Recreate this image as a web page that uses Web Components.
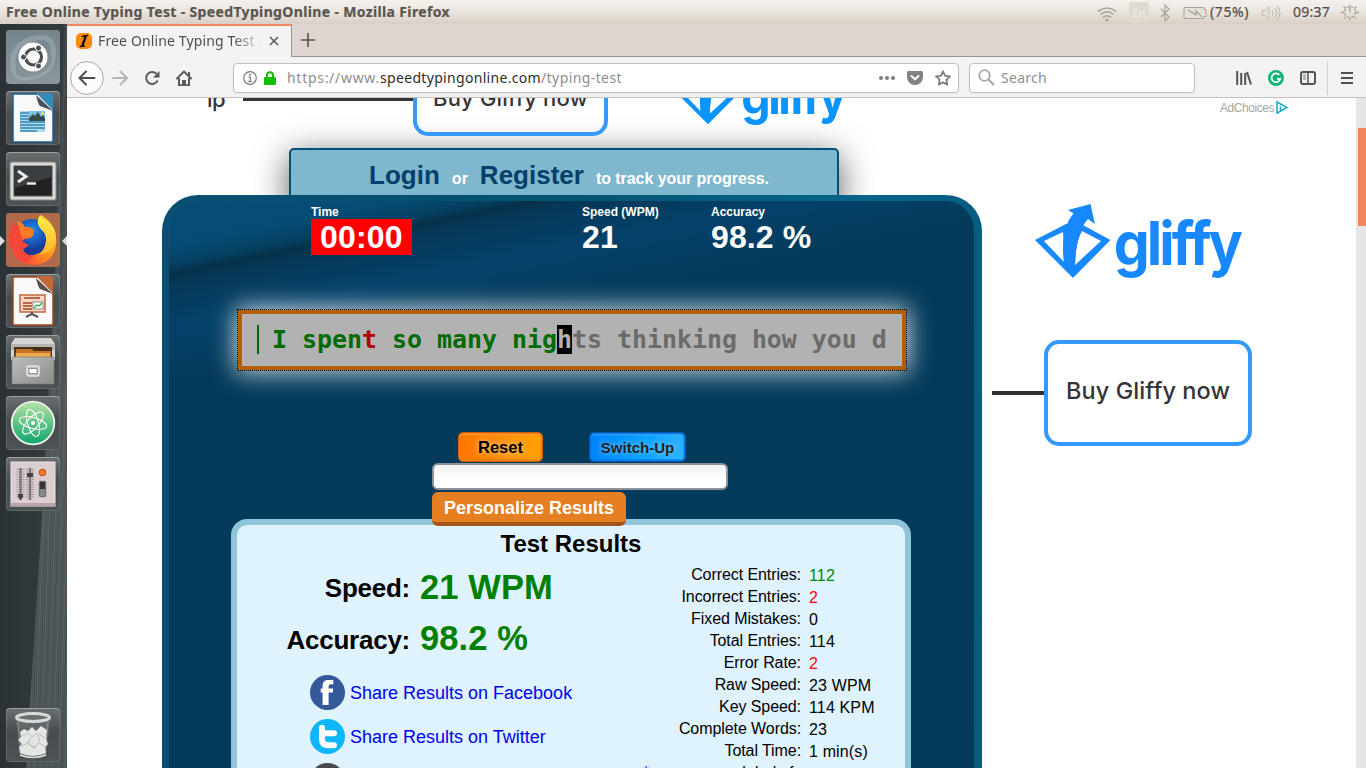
<!DOCTYPE html>
<html lang="en">
<head>
<meta charset="utf-8">
<title>Free Online Typing Test - SpeedTypingOnline</title>
<style>
html,body{margin:0;width:1366px;height:768px;overflow:hidden;background:#fff}
</style>
</head>
<body>
<desktop-screen></desktop-screen>
<script>
const define=(name,html,init)=>{
  const t=document.createElement('template');t.innerHTML=html;
  customElements.define(name,class extends HTMLElement{
    connectedCallback(){
      if(this.shadowRoot)return;
      this.attachShadow({mode:'open'}).appendChild(t.content.cloneNode(true));
      if(init)init.call(this,this.shadowRoot);
    }
  });
};

/* Inline text whose tracking is adjusted to span the width given in "w". */
define('fit-text','<style>:host{display:inline-block;white-space:pre;flex:none}</style><slot></slot>',function(){
  const fit=()=>{
    const w=+this.getAttribute('w');if(!w)return;
    this.style.letterSpacing='0px';
    const now=this.getBoundingClientRect().width;
    if(now)this.style.letterSpacing=((w-now)/this.textContent.length).toFixed(3)+'px';
  };
  fit();requestAnimationFrame(fit);
});

const ICONS={
wifi:[20,18,'<g fill="none" stroke="#a8a29b" stroke-width="1.6"><path d="M1 6.500Q10-.5 19 6.500"/><path d="M3.500 9.500Q10 4 16.500 9.500"/><path d="M6 12.500Q10 9 14 12.500"/></g><circle cx="10" cy="15" r="1.500" fill="#a8a29b"/>'],
bluetooth:[12,18,'<path d="M2 5l8 8-4 4V1l4 4-8 8" fill="none" stroke="#aaa49d" stroke-width="1.200"/>'],
battery:[24,14,'<path d="M1 1.500h20v2h2v7h-2v2H1z" fill="#e6e0da" stroke="#aaa49d"/><path d="M5 4l8 5v-4l6 6" fill="none" stroke="#aaa49d" stroke-width="1.300"/>'],
sound:[20,18,'<path d="M1 6.500h3l4-4v13l-4-4H1z" fill="#e6e0da" stroke="#c4bdb5"/><path d="M11 6q2.500 3 0 6M13.500 4q4.500 5 0 10M16 2q6 7 0 14" fill="none" stroke="#bab3ab"/>'],
gear:[18,18,'<circle cx="9" cy="9" r="5.500" fill="none" stroke="#aaa49d" stroke-width="1.200" stroke-dasharray="3 1.300"/><path d="M9 2v7M2.500 3.500l2 2M15.500 3.500l-2 2M0 9.500h3M15 9.500h3M3 15.500l1.500-1.500M15 15.500L13.500 14M9 15v2" stroke="#aaa49d" stroke-width="1.400"/>'],
favicon:[16,16,'<rect width="16" height="16" rx="5" fill="#ff8a0c"/><path d="M9.800 3L6.300 13" stroke="#111" stroke-width="2.400"/><path d="M5.800 3.600q2.500-.2 6.400-1.300M3.800 13.600q3-.8 5.200-.3" stroke="#111" stroke-width="1.500" fill="none"/>'],
close:[10,10,'<path d="M1 1l8 8M9 1l-8 8" stroke="#5a5a59" stroke-width="1.600"/>'],
plus:[14,14,'<path d="M7 0v14M0 7h14" stroke="#5a5653" stroke-width="1.700"/>'],
back:[34,34,'<circle cx="17" cy="17" r="16.400" fill="#fcfcfc" stroke="#a9a8a6"/><path d="M24.500 17H10M16 10.500L9.500 17l6.500 6.500" fill="none" stroke="#4c4c4c" stroke-width="2" stroke-linecap="round" stroke-linejoin="round"/>'],
forward:[16,16,'<path d="M1 8h14M8.500 1.500L15 8l-6.500 6.500" fill="none" stroke="#b6b5b4" stroke-width="2" stroke-linecap="round" stroke-linejoin="round"/>'],
reload:[16,16,'<path d="M13.600 10.500A6 6 0 1 1 12.500 3.800" fill="none" stroke="#5c5c5b" stroke-width="2"/><path d="M15.500 1v6.500H9z" fill="#5c5c5b"/>'],
home:[16,16,'<path d="M1 8.500L8 1.500l7 7" fill="none" stroke="#5c5c5b" stroke-width="2" stroke-linecap="round" stroke-linejoin="round"/><path d="M3 8v7.200h10V8" fill="none" stroke="#5c5c5b" stroke-width="2"/><path d="M6 15v-5h4v5z" fill="#5c5c5b"/><path d="M12 2h2v4h-2z" fill="#5c5c5b"/>'],
info:[14,14,'<circle cx="7" cy="7" r="6.300" fill="none" stroke="#7b7b7b" stroke-width="1.200"/><path d="M5.500 6H7.300v4.500M5 10.500h4" stroke="#7b7b7b" stroke-width="1.200" fill="none"/><circle cx="7" cy="3.700" r="1" fill="#7b7b7b"/>'],
lock:[12,14,'<rect y="6" width="12" height="8" rx="1" fill="#12bc00"/><path d="M3 7V4.300a3 3 0 0 1 6 0V7" fill="none" stroke="#12bc00" stroke-width="2"/>'],
dots:[16,4,'<circle cx="2" cy="2" r="2" fill="#7c7c7c"/><circle cx="8" cy="2" r="2" fill="#7c7c7c"/><circle cx="14" cy="2" r="2" fill="#7c7c7c"/>'],
pocket:[16,14,'<path d="M1.500 0h13A1.500 1.500 0 0 1 16 1.500V6A8 8 0 0 1 0 6V1.500A1.500 1.500 0 0 1 1.500 0z" fill="#818180"/><path d="M4.500 5L8 8.300 11.500 5" stroke="#fff" stroke-width="2" fill="none" stroke-linecap="round" stroke-linejoin="round"/>'],
star:[16,16,'<path d="M8 1.300l2.100 4.500 4.900.6-3.600 3.300.9 4.900L8 12.200l-4.300 2.400.9-4.900L1 6.400l4.900-.6z" fill="none" stroke="#7c7c7c" stroke-width="1.800" stroke-linejoin="round"/>'],
search:[17,17,'<circle cx="6.500" cy="6.500" r="5.300" fill="none" stroke="#a5a5a4" stroke-width="1.700"/><path d="M10.500 10.500l5.500 5.500" stroke="#a5a5a4" stroke-width="2"/>'],
library:[16,14,'<path d="M1.200 0v14M5.200 2v12M9.200 2v12M11 1l4 12.500" stroke="#555" stroke-width="2"/>'],
grammarly:[16,16,'<circle cx="8" cy="8" r="8" fill="#11b676"/><path d="M11.300 4.900A4.400 4.400 0 1 0 12.300 8.800H9" fill="none" stroke="#fff" stroke-width="1.700"/>'],
sidebar:[16,14,'<rect x="1" y="1" width="14" height="12" rx="2" fill="none" stroke="#555" stroke-width="2"/><path d="M8 1v12" stroke="#555" stroke-width="1.500"/><path d="M3 4h3M3 6h3M3 8h3" stroke="#777"/>'],
menu:[12,12,'<path d="M0 1h12M0 6h12M0 11h12" stroke="#505050" stroke-width="2"/>'],
adchoices:[12,13,'<path d="M1 .8l10 5.700L1 12.200z" fill="none" stroke="#12aacc" stroke-width="1.500"/><path d="M4.500 5.500v4.500" stroke="#12aacc" stroke-width="1.500"/><circle cx="4.500" cy="3.700" r=".8" fill="#12aacc"/>'],
facebook:[36,36,'<circle cx="17.500" cy="17.500" r="17.500" fill="#34599b"/><path d="M23.300 9.300h-2.400q-2.300 0-2.300 2.300v2h4.400v3.800h-4.400V30h-6V17.400h-1.900v-3.800h1.900v-2.700q0-5.900 5.800-5.900h4.900z" fill="#fff"/>'],
twitter:[36,36,'<circle cx="17.500" cy="17.500" r="17.500" fill="#0cb6fb"/><path d="M12 8.800V20q0 6.300 6.300 6.300H24M12.500 14.300H24" fill="none" stroke="#fff" stroke-width="6" stroke-linecap="round"/>'],
mail:[36,36,'<circle cx="17.500" cy="17.500" r="17.500" fill="#4a4a4a"/>'],
ubuntu:[54,54,'<defs><linearGradient id="g" x2="0" y2="1"><stop stop-color="#74858c"/><stop offset="1" stop-color="#8a969b"/></linearGradient></defs><rect width="54" height="54" rx="4" fill="url(#g)"/><g fill="none" stroke="#c3cccf" opacity=".3"><path d="M8 42Q2 16 26 9t21 18" stroke-width="5"/><path d="M46 12q8 28-16 35T8 36" stroke-width="3"/></g><circle cx="27" cy="27" r="14.500" fill="#fff"/><circle cx="27.500" cy="27" r="8" fill="none" stroke="#4a4f52" stroke-width="3.200"/><g fill="#4a4f52" stroke="#fff"><circle cx="17.500" cy="27" r="3"/><circle cx="32.500" cy="18" r="3"/><circle cx="32.500" cy="36" r="3"/></g>'],
writer:[54,54,'<path d="M7 3h26l14 15v33H7z" fill="#fafafa" stroke="#155f92" stroke-width="1.500"/><path d="M30 2h17v17z" fill="#3a89bd"/><path d="M30 4q2 9 4 11l13 5" fill="#223" opacity=".8"/><path d="M14 20h25v21H14z" fill="#a9dcf0"/><path d="M14 22h9M14 25h9M14 28h9M14 31h25M14 34h25M14 37h25M14 40h17" stroke="#3282b4" stroke-width="1.400"/><path d="M23 20h16v10H23z" fill="#80c2ec"/><path d="M23 30v-3l4-4 2 2 3-4 3 5 2-2 2 3v3z" fill="#394b44"/><circle cx="36.500" cy="22.500" r="1.500" fill="#fd4"/>'],
terminal:[54,54,'<rect x="4" y="10" width="46" height="38" rx="2" fill="#d9d9d6" stroke="#888"/><rect x="8" y="14" width="38" height="30" fill="#1f2122" stroke="#555"/><path d="M9 15h36v10L9 36z" fill="#52585a" opacity=".55"/><path d="M12 19l8 5.500-8 5.500" fill="none" stroke="#eee" stroke-width="2.800"/><path d="M21 31.500h9" stroke="#eee" stroke-width="2.400"/>'],
firefox:[54,54,'<defs><linearGradient id="a" x1="1" x2="0" y2="1"><stop stop-color="#ffe23a"/><stop offset=".45" stop-color="#ff9a1a"/><stop offset="1" stop-color="#f4264f"/></linearGradient><linearGradient id="y" x2="0" y2="1"><stop stop-color="#fff04a"/><stop offset="1" stop-color="#ffb428"/></linearGradient><radialGradient id="b" cx=".5" cy=".3"><stop stop-color="#1c8ef2"/><stop offset="1" stop-color="#183a9a"/></radialGradient></defs><rect width="54" height="54" rx="4" fill="#b0694a"/><circle cx="26" cy="25" r="19" fill="url(#b)"/><path d="M4 26q1 25 23 26 20-1 23-20 2-15-8-25-3-3-7-5-5 8 0 14 6 5 5 12-1 12-12 14-11 1-17-6-6-2-9-10z" fill="url(#a)"/><path d="M34 2q-5 8 1 14 6 5 5 13-1 9-8 13 16-2 18-16Q50 14 41 8q-5-2-7-6z" fill="url(#y)"/><path d="M8 9q-6 12-4 22 3 13 16 19l8-7q-9-1-11-7 3-1 6-4l-6-3q-1-3 3-3l5-1 2-5q-7-4-12-5-4-2-7-6z" fill="#f7473a"/><path d="M13 15l-2-7q6 1 8 6 5-1 9 3l-1 6-4 2q-6-1-6 3z" fill="#ff7b25"/>'],
impress:[54,54,'<path d="M7 3h26l14 15v33H7z" fill="#fafafa" stroke="#a3451b" stroke-width="1.500"/><path d="M30 2h17v17z" fill="#c2673a"/><path d="M30 4q2 9 4 11l13 5" fill="#322" opacity=".8"/><rect x="14" y="21" width="25" height="17" fill="#f6d8c4" stroke="#c2673a" stroke-width="1.500"/><path d="M18 24h16" stroke="#a3451b" stroke-width="1.500"/><path d="M17 29h9M17 32h9M17 35h9" stroke="#a3451b" stroke-width="1.300"/><rect x="27" y="28" width="10" height="7" fill="#fff" stroke="#777" stroke-width=".8"/><path d="M28 34l3-3 2 1 3-3" stroke="#37a13b" fill="none" stroke-width="1.300"/><path d="M26 38v2l-6 3M26 40l6 3" stroke="#555" stroke-width="2" fill="none"/>'],
files:[54,54,'<defs><linearGradient id="f" x2="1" y2="1"><stop stop-color="#bdbdbb"/><stop offset="1" stop-color="#8b8b89"/></linearGradient></defs><path d="M9 3h36l4 6v16H5V9z" fill="#d5d5d2"/><path d="M5 9h44v6H5z" fill="#b6b6b4"/><path d="M8 12h38v12H8z" fill="#4a2f18"/><path d="M10 14h16l2 2h17v8H9z" fill="#c27422"/><path d="M10 18h34v6H10z" fill="#eea850"/><path d="M6 22h42v27H6z" fill="url(#f)" stroke="#777" stroke-width=".6"/><rect x="21" y="31" width="12" height="10" rx="2" fill="#bbb" stroke="#e6e6e4" stroke-width="1.500"/><rect x="23" y="33.500" width="8" height="5" fill="#fff" stroke="#777" stroke-width=".7"/>'],
atom:[54,54,'<defs><linearGradient id="t" x2="0" y2="1"><stop stop-color="#b4e2a4"/><stop offset="1" stop-color="#10a56c"/></linearGradient></defs><circle cx="27" cy="27" r="21.300" fill="url(#t)" stroke="#f2f2ef" stroke-width="1.800"/><g fill="none" stroke="#fff" stroke-width="1.100"><ellipse cx="27" cy="27" rx="14" ry="5.500" transform="rotate(15 27 27)"/><ellipse cx="27" cy="27" rx="14" ry="5.500" transform="rotate(74 27 27)"/><ellipse cx="27" cy="27" rx="14" ry="5.500" transform="rotate(-47 27 27)"/></g><circle cx="27" cy="27" r="2" fill="#fff"/>'],
mixer:[54,54,'<rect x="5" y="5" width="44" height="44" fill="#dccdd0" stroke="#eee3e4"/><path d="M5 46h44v3H5z" fill="#b9a5a8"/><path d="M14.500 11v32M24 11v32" stroke="#777" stroke-width="2.500"/><path d="M11.500 12v30M17.500 12v30M21 12v30M27 12v30" stroke="#9d9193" stroke-dasharray="1 1.500" stroke-width="2"/><path d="M12 37h5v3l-2.500 3-2.500-3zM21 16h6v4h-6z" fill="#444"/><circle cx="36.500" cy="15.500" r="3.300" fill="#ff7a28" stroke="#b44b14"/><rect x="33" y="24" width="7" height="16" rx="1" fill="#353535" stroke="#aaa"/><path d="M34 32h5v7h-5z" fill="#888"/>'],
trash:[54,54,'<path d="M10 12l4 35q13 5 26 0l4-35z" fill="#7b8182" opacity=".45"/><path d="M14 24l4-3 4 2 4-4 4 4 5-5 6 4-1 9 2 5-3 3 1 6q-13 6-26 0l-1-6 3-3-4-4 3-3z" fill="#e3e6e3"/><path d="M16 28l6-3 4 4 5-4 8 5M15 38l7-3 5 5 6-5 7 4M24 30l-2 6 8 4M32 27l2 7" fill="none" stroke="#bcc0be"/><path d="M12 14l3 33M42 14l-3 33" stroke="#c6caca" opacity=".4"/><ellipse cx="27" cy="9.500" rx="16.500" ry="4" fill="#6a7071" stroke="#d9dad8" stroke-width="3"/><path d="M14 47q13 5 26 0" stroke="#ddd" fill="none" stroke-width="1.500"/>']
};
define('ui-icon','<style>:host{display:block;flex:none}svg{display:block}</style>',function(r){
  const [w,h,body]=ICONS[this.getAttribute('name')]||[0,0,''];
  r.innerHTML+=`<svg width="${w}" height="${h}" viewBox="0 0 ${w} ${h}">${body}</svg>`;
});

define('system-bar',`<style>
:host{display:flex;align-items:center;height:24px;box-sizing:border-box;padding:0 7px 0 6px;background:linear-gradient(#f4f1ed,#ebe6e0 45%,#d9cfc7);font:14px/24px "Noto Sans",sans-serif;color:#514d48;-webkit-text-stroke:.2px}
b{flex:1;color:#5a554e;font-size:14px}
.en{width:20px;height:21px;border-radius:2px;background:#dfd9d0;color:#f0ece6;font:500 11px/21px "Noto Sans",sans-serif;text-align:center;margin:0 10px 0 12px}
</style><b><fit-text w="444">Free Online Typing Test - SpeedTypingOnline - Mozilla Firefox</fit-text></b>
<ui-icon name="wifi" style="margin-top:3px"></ui-icon><span class="en">En</span><ui-icon name="bluetooth" style="margin-top:1px"></ui-icon>
<ui-icon name="battery" style="margin:2px 3px 0 12px"></ui-icon><fit-text w="39">(75%)</fit-text>
<ui-icon name="sound" style="margin:2px 12px 0"></ui-icon><fit-text w="37">09:37</fit-text><ui-icon name="gear" style="margin-left:11px"></ui-icon>`);

define('dock-tile',`<style>
:host{display:block;position:relative;width:54px;height:54px;border-radius:4px;background:linear-gradient(#6b6f70,#464b4d 45%,#4d5355);box-shadow:inset 0 0 0 1px #ffffff22,inset 0 1px 0 #ffffff40;margin:0 auto 7px 6px;flex:none}
i,s{display:none;position:absolute;top:23px;border:5px solid transparent}
i{left:-6px;border-left-color:#dcdcdc;border-right:0}
s{right:-7px;border-right-color:#dcdcdc;border-left:0}
:host([active]) i,:host([active]) s{display:block}
</style><i></i><s></s>`,function(r){
  const ic=document.createElement('ui-icon');ic.setAttribute('name',this.getAttribute('icon'));
  r.insertBefore(ic,r.querySelector('i'));
});

define('launcher-dock',`<style>
:host{display:flex;flex-direction:column;position:relative;box-sizing:border-box;padding-top:6px;background:linear-gradient(90deg,#2b3235,#333b3e 80%,#30383b);overflow:hidden}
.streak{position:absolute;inset:0;background:repeating-linear-gradient(92deg,#ffffff0c 0 1px,transparent 1px 3px,#0000000f 3px 4px,transparent 4px 6px),linear-gradient(#3b4346,#50585b 50%,#4c5559);clip-path:polygon(64px 0,67px 0,67px 100%,26px 100%,43px 476px,55px 250px)}
dock-tile:last-child{margin-top:auto;margin-bottom:6px}
</style><div class="streak"></div>
<dock-tile icon="ubuntu"></dock-tile><dock-tile icon="writer"></dock-tile><dock-tile icon="terminal"></dock-tile><dock-tile icon="firefox" active></dock-tile><dock-tile icon="impress"></dock-tile><dock-tile icon="files"></dock-tile><dock-tile icon="atom"></dock-tile><dock-tile icon="mixer"></dock-tile><dock-tile icon="trash"></dock-tile>`);

define('tab-strip',`<style>
:host{display:flex;height:33px;background:#dfd6d0;font:14px/33px "Noto Sans",sans-serif;color:#4e4e4d}
.tab{display:flex;align-items:center;width:225px;box-sizing:border-box;border-top:2px solid #ef8763;border-right:1px solid #9c948e;background:#f4f3f2;padding:0 12px 0 9px}
.t{width:165px;margin:-2px 6px 0 6px;overflow:hidden;-webkit-mask:linear-gradient(90deg,#000 135px,transparent 165px)}
.tab ui-icon{margin-top:-1px}
.rest{flex:1;display:flex;align-items:center;padding-left:9px;border-bottom:1px solid #9b9590}
</style><div class="tab"><ui-icon name="favicon"></ui-icon><div class="t"><fit-text w="165">Free Online Typing Test -</fit-text></div><ui-icon name="close"></ui-icon></div><div class="rest"><ui-icon name="plus"></ui-icon></div>`);

define('nav-bar',`<style>
:host{display:flex;align-items:center;height:41px;box-sizing:border-box;border-bottom:1px solid #c4c1be;background:#f4f3f2;padding:1px 12px 0 3px;font:14px/28px "Noto Sans",sans-serif;color:#8e8e8d}
.box{display:flex;align-items:center;box-sizing:border-box;height:30px;background:#fff;border:1px solid #c3c0bd;border-radius:4px;box-shadow:0 1px 2px #0000000d}
.url{width:726px;margin-left:41px;padding:0 7px 0 9px}
.search{width:226px;margin:0 41px 0 10px;padding-left:8px}
.url b{font-weight:400;color:#2d2d2d}
.sp{flex:1}
.sep{width:1px;height:34px;background:#d2d0ce;margin:0 13px 0 11px}
</style>
<ui-icon name="back"></ui-icon><ui-icon name="forward" style="margin:0 16px 0 8px"></ui-icon><ui-icon name="reload" style="margin-right:16px"></ui-icon><ui-icon name="home"></ui-icon>
<div class="box url"><ui-icon name="info"></ui-icon><ui-icon name="lock" style="margin:0 11px 0 7px"></ui-icon><fit-text w="93">https://www.</fit-text><b><fit-text w="161">speedtypingonline.com</fit-text></b><fit-text w="81">/typing-test</fit-text><span class="sp"></span><ui-icon name="dots"></ui-icon><ui-icon name="pocket" style="margin:0 12px"></ui-icon><ui-icon name="star"></ui-icon></div>
<div class="box search"><ui-icon name="search" style="margin-right:6px"></ui-icon><fit-text w="46">Search</fit-text></div>
<ui-icon name="library"></ui-icon><ui-icon name="grammarly" style="margin:0 16px"></ui-icon><ui-icon name="sidebar"></ui-icon><span class="sep"></span><ui-icon name="menu"></ui-icon>`);

define('gliffy-logo',`<style>
:host{display:flex;font:700 57px/1 Inter,sans-serif;color:#1888ff}
svg{width:1.333em;height:1.316em;flex:none;margin-right:.05em}
span{display:block;line-height:1;margin-top:.2em;white-space:nowrap;letter-spacing:-.053em;transform:scaleY(1.06)}
</style><svg viewBox="0 0 76 75" fill="currentColor"><path fill-rule="evenodd" d="M0 36L31 20H46L75.500 36 38 74zM9 37L30 59 28 28zM47 27L66 37 40 61Q40 40 47 27z"/><path d="M29 60C27 42 27 23 38.500 9.500L33 6 55.500 0 60 20 53 15C47 22 41 34 40 64z"/></svg><span>gliffy</span>`);

define('ad-button',`<style>
:host{display:flex;align-items:center;justify-content:center;box-sizing:border-box;border:4px solid #3399fd;border-radius:15px;font:500 23.500px/30px Inter,sans-serif;color:#353535}
</style><slot></slot>`);

define('banner-ad',`<style>
:host{display:flex;align-items:center;height:74px;margin-top:-36px;padding:0 0 12px 45px;color:#353535;font:500 22px/30px Inter,sans-serif}
.line{width:170px;height:4px;background:#353535;margin-left:18px}
ad-button{width:195px;height:74px;font-size:22px}
gliffy-logo{font-size:46.500px;color:#0a94ff;margin:-9px 0 0 69px}
</style><fit-text w="18">ip</fit-text><span class="line"></span><ad-button><fit-text w="155" style="margin-top:-2px">Buy Gliffy now</fit-text></ad-button><gliffy-logo></gliffy-logo>`);

define('side-ad',`<style>
:host{display:block;width:298px;color:#353535}
.c{display:flex;justify-content:flex-end;align-items:center;height:13px;padding:3px 2px 0 0;font:12px/13px "Liberation Sans",sans-serif;color:#a6a6a6}
.c ui-icon{margin-left:2px}
gliffy-logo{margin:90px 0 0 43px;height:74px}
.b{display:flex;align-items:center;margin-top:62px}
.line{width:52px;height:4px;background:#303030}
ad-button{width:208px;height:106px}
</style><div class="c"><fit-text w="54" style="margin-top:2px">AdChoices</fit-text><ui-icon name="adchoices"></ui-icon></div><gliffy-logo></gliffy-logo><div class="b"><span class="line"></span><ad-button><fit-text w="164" style="margin-top:-5px">Buy Gliffy now</fit-text></ad-button></div>`);

define('login-tab',`<style>
:host{display:flex;justify-content:center;align-items:baseline;width:550px;height:60px;margin:0 0 -13px 127px;box-sizing:border-box;border:2px solid #054e76;border-radius:5px;background:#7fb7ce;box-shadow:0 8px 34px rgba(0,0,0,.66);font:bold 16px/50px "Liberation Sans",sans-serif;color:#fff;padding-left:10px}
a{font-size:26px;color:#04406a}
span{margin:0 12px}
:last-child{margin-right:0}
</style><a>Login</a><span>or</span><a>Register</a><span><fit-text w="173">to track your progress.</fit-text></span>`);

define('stat-field',`<style>
:host{display:block;font:bold 12px/14px "Liberation Sans",sans-serif;color:#fff}
b{display:block;font-size:32px;line-height:36px;width:max-content;letter-spacing:.1px}
:host([alert]) b{background:#f00;padding:0 9px;letter-spacing:.2px}
</style><slot name="label"></slot><b><slot></slot></b>`);

define('typing-line',`<style>
:host{display:flex;align-items:center;box-sizing:border-box;width:668px;height:60px;margin:55px 0 0 69px;border:4px solid #b35f00;outline:1px dotted #000;background:#b2b2b2;box-shadow:0 0 24px 2px rgba(255,255,255,.85);padding:0 0 2px 15px;font:bold 24.920px/29px "DejaVu Sans Mono",monospace;color:#6b6b6b;white-space:pre}
.ok{color:#006b00}.bad{color:#b20000}.cur{background:#000;color:#b2b2b2}
.caret{width:13px;height:29px;border-left:2px solid #006b00}
</style><span class="caret"></span><span class="ok">I spen</span><span class="bad">t</span><span class="ok"> so many nig</span><span class="cur">h</span><span>ts thinking how you d</span>`);

define('glossy-button',`<style>
:host{display:block;box-sizing:border-box;height:30px;border-radius:5px;text-align:center;font:bold 16.500px/29px "Liberation Sans",sans-serif;color:#000;border:1px solid #c9600a;background:linear-gradient(100deg,#ff7300,#ff8c0a 50%,#ffa500);box-shadow:inset 0 0 0 1.500px #ff7a10,inset 0 3px 1px -1px #ffc070;text-shadow:0 0 6px #ffd9a0}
:host([blue]){border-color:#0058b8;background:linear-gradient(100deg,#0080ff,#08a0ff 55%,#30b4ff);box-shadow:inset 0 0 0 1.500px #0878e0,inset 0 3px 1px -1px #70ccff;font-size:15px;color:#222;text-shadow:0 0 6px #8fd3ff}
</style><slot></slot>`);

define('share-link',`<style>
:host{display:flex;align-items:center;height:35px;gap:4px;margin-bottom:9px;font:18px/35px "Liberation Sans",sans-serif;color:#00e}
span{padding-top:2px}
</style><span><slot></slot></span>`,function(r){
  const ic=document.createElement('ui-icon');ic.setAttribute('name',this.getAttribute('icon'));
  r.insertBefore(ic,r.querySelector('span'));
});

define('result-row',`<style>
:host{display:grid;grid-template-columns:165px 1fr;column-gap:8px;height:22px;font:16px/22px "Liberation Sans",sans-serif;color:#000}
span{text-align:right;white-space:nowrap;letter-spacing:-.08px}
b{font-weight:400;padding-top:1px;white-space:nowrap;letter-spacing:.15px}
</style><span><slot name="label"></slot></span><b><slot></slot></b>`);

define('results-card',`<style>
:host{display:block;box-sizing:border-box;width:680px;height:300px;margin:-7px 0 0 62px;border:6px solid #8fc5d8;border-radius:16px;background:#dff3ff;font-family:"Liberation Sans",sans-serif;color:#000}
h1{margin:0;padding-top:4px;font:bold 24px/30px "Liberation Sans",sans-serif;text-align:center}
.cols{display:flex}
.left{width:399px}
.big{display:grid;grid-template-columns:173px 1fr;column-gap:10px;height:52px;font:bold 26px/52px "Liberation Sans",sans-serif}
.big span{text-align:right;letter-spacing:-.25px;padding-top:3px}.big b{font-size:34.500px;padding-top:2px;letter-spacing:.1px}
.big b{color:#008000}
.links{padding:12px 0 0 73px}
.rows{flex:1;padding-top:5px}
.note{font-size:16px;line-height:22px;margin-left:7px;white-space:nowrap;letter-spacing:.05px}
.note i{font-style:normal;color:#00e}
</style><h1>Test Results</h1><div class="cols"><div class="left">
<div class="big"><span>Speed:</span><b>21 WPM</b></div><div class="big"><span>Accuracy:</span><b style="margin-top:-1px">98.2 %</b></div>
<div class="links"><share-link icon="facebook">Share Results on Facebook</share-link><share-link icon="twitter">Share Results on Twitter</share-link><share-link icon="mail"></share-link></div></div>
<div class="rows"><result-row><span slot="label">Correct Entries:</span><span style="color:#008a00">112</span></result-row>
<result-row><span slot="label">Incorrect Entries:</span><span style="color:#f00">2</span></result-row>
<result-row><span slot="label">Fixed Mistakes:</span>0</result-row>
<result-row><span slot="label">Total Entries:</span>114</result-row>
<result-row><span slot="label">Error Rate:</span><span style="color:#f00">2</span></result-row>
<result-row><span slot="label">Raw Speed:</span>23 WPM</result-row>
<result-row><span slot="label">Key Speed:</span>114 KPM</result-row>
<result-row><span slot="label">Complete Words:</span>23</result-row>
<result-row><span slot="label">Total Time:</span>1 min(s)</result-row>
<div class="note"><i>*</i> mouse over labels for</div></div></div>`);

define('test-panel',`<style>
:host{display:block;position:relative;box-sizing:border-box;width:820px;height:640px;border:solid transparent;border-width:6px 8px 0 7px;border-radius:36px 36px 0 0;
background:linear-gradient(168.600deg,#054e79 0,#054c75 45px,#053f60 64px,#06314a 72px,#05395a 84px,#04416a 125px,#043b5b 180px) padding-box,linear-gradient(100deg,#0a4f70,#055271 40%,#066389 75%,#05587b) border-box}
.stats{display:flex;padding:4px 0 0 142px;height:50px}
.s1{width:271px}.s2{width:129px}
.btns{display:flex;padding:62px 0 0 289px;gap:46px}
.input{width:296px;height:27px;box-sizing:border-box;margin:1px 0 0 263px;border:2px solid #8e9399;border-radius:6px;background:linear-gradient(#f1f1f1,#fff 70%)}
.pers{position:relative;width:194px;height:34px;box-sizing:border-box;margin:2px 0 0 263px;border-radius:6px;background:#e67e22;border-bottom:4px solid #a3541a;font:bold 18px/32px "Liberation Sans",sans-serif;color:#fff;text-align:center}
</style><div class="stats"><stat-field class="s1" alert><span slot="label">Time</span>00:00</stat-field><stat-field class="s2"><span slot="label">Speed (WPM)</span>21</stat-field><stat-field><span slot="label">Accuracy</span>98.2 %</stat-field></div>
<typing-line></typing-line>
<div class="btns"><glossy-button style="width:85px">Reset</glossy-button><glossy-button blue style="width:97px">Switch-Up</glossy-button></div>
<div class="input"></div><div class="pers">Personalize Results</div><results-card></results-card>`);

define('page-view',`<style>
:host{display:flex;overflow:hidden;background:#fff;min-height:0}
.main{width:820px;margin-left:95px;flex:none;display:flow-root}
side-ad{margin-left:10px;flex:none}
.bar{width:8px;margin-left:auto;background:#e6e6e6;padding:30px 0 0 2px}
.bar i{display:block;height:98px;background:#f0875c}
</style><div class="main"><banner-ad></banner-ad><login-tab></login-tab><test-panel></test-panel></div><side-ad></side-ad><div class="bar"><i></i></div>`);

define('browser-window',`<style>:host{display:grid;grid-template-rows:33px 41px 1fr;min-height:0;min-width:0}</style><tab-strip></tab-strip><nav-bar></nav-bar><page-view></page-view>`);
define('desktop-screen',`<style>:host{display:grid;grid-template:24px 744px / 67px 1299px;width:1366px;height:768px;overflow:hidden}system-bar{grid-column:1/3}</style><system-bar></system-bar><launcher-dock></launcher-dock><browser-window></browser-window>`);
</script>
</body>
</html>
